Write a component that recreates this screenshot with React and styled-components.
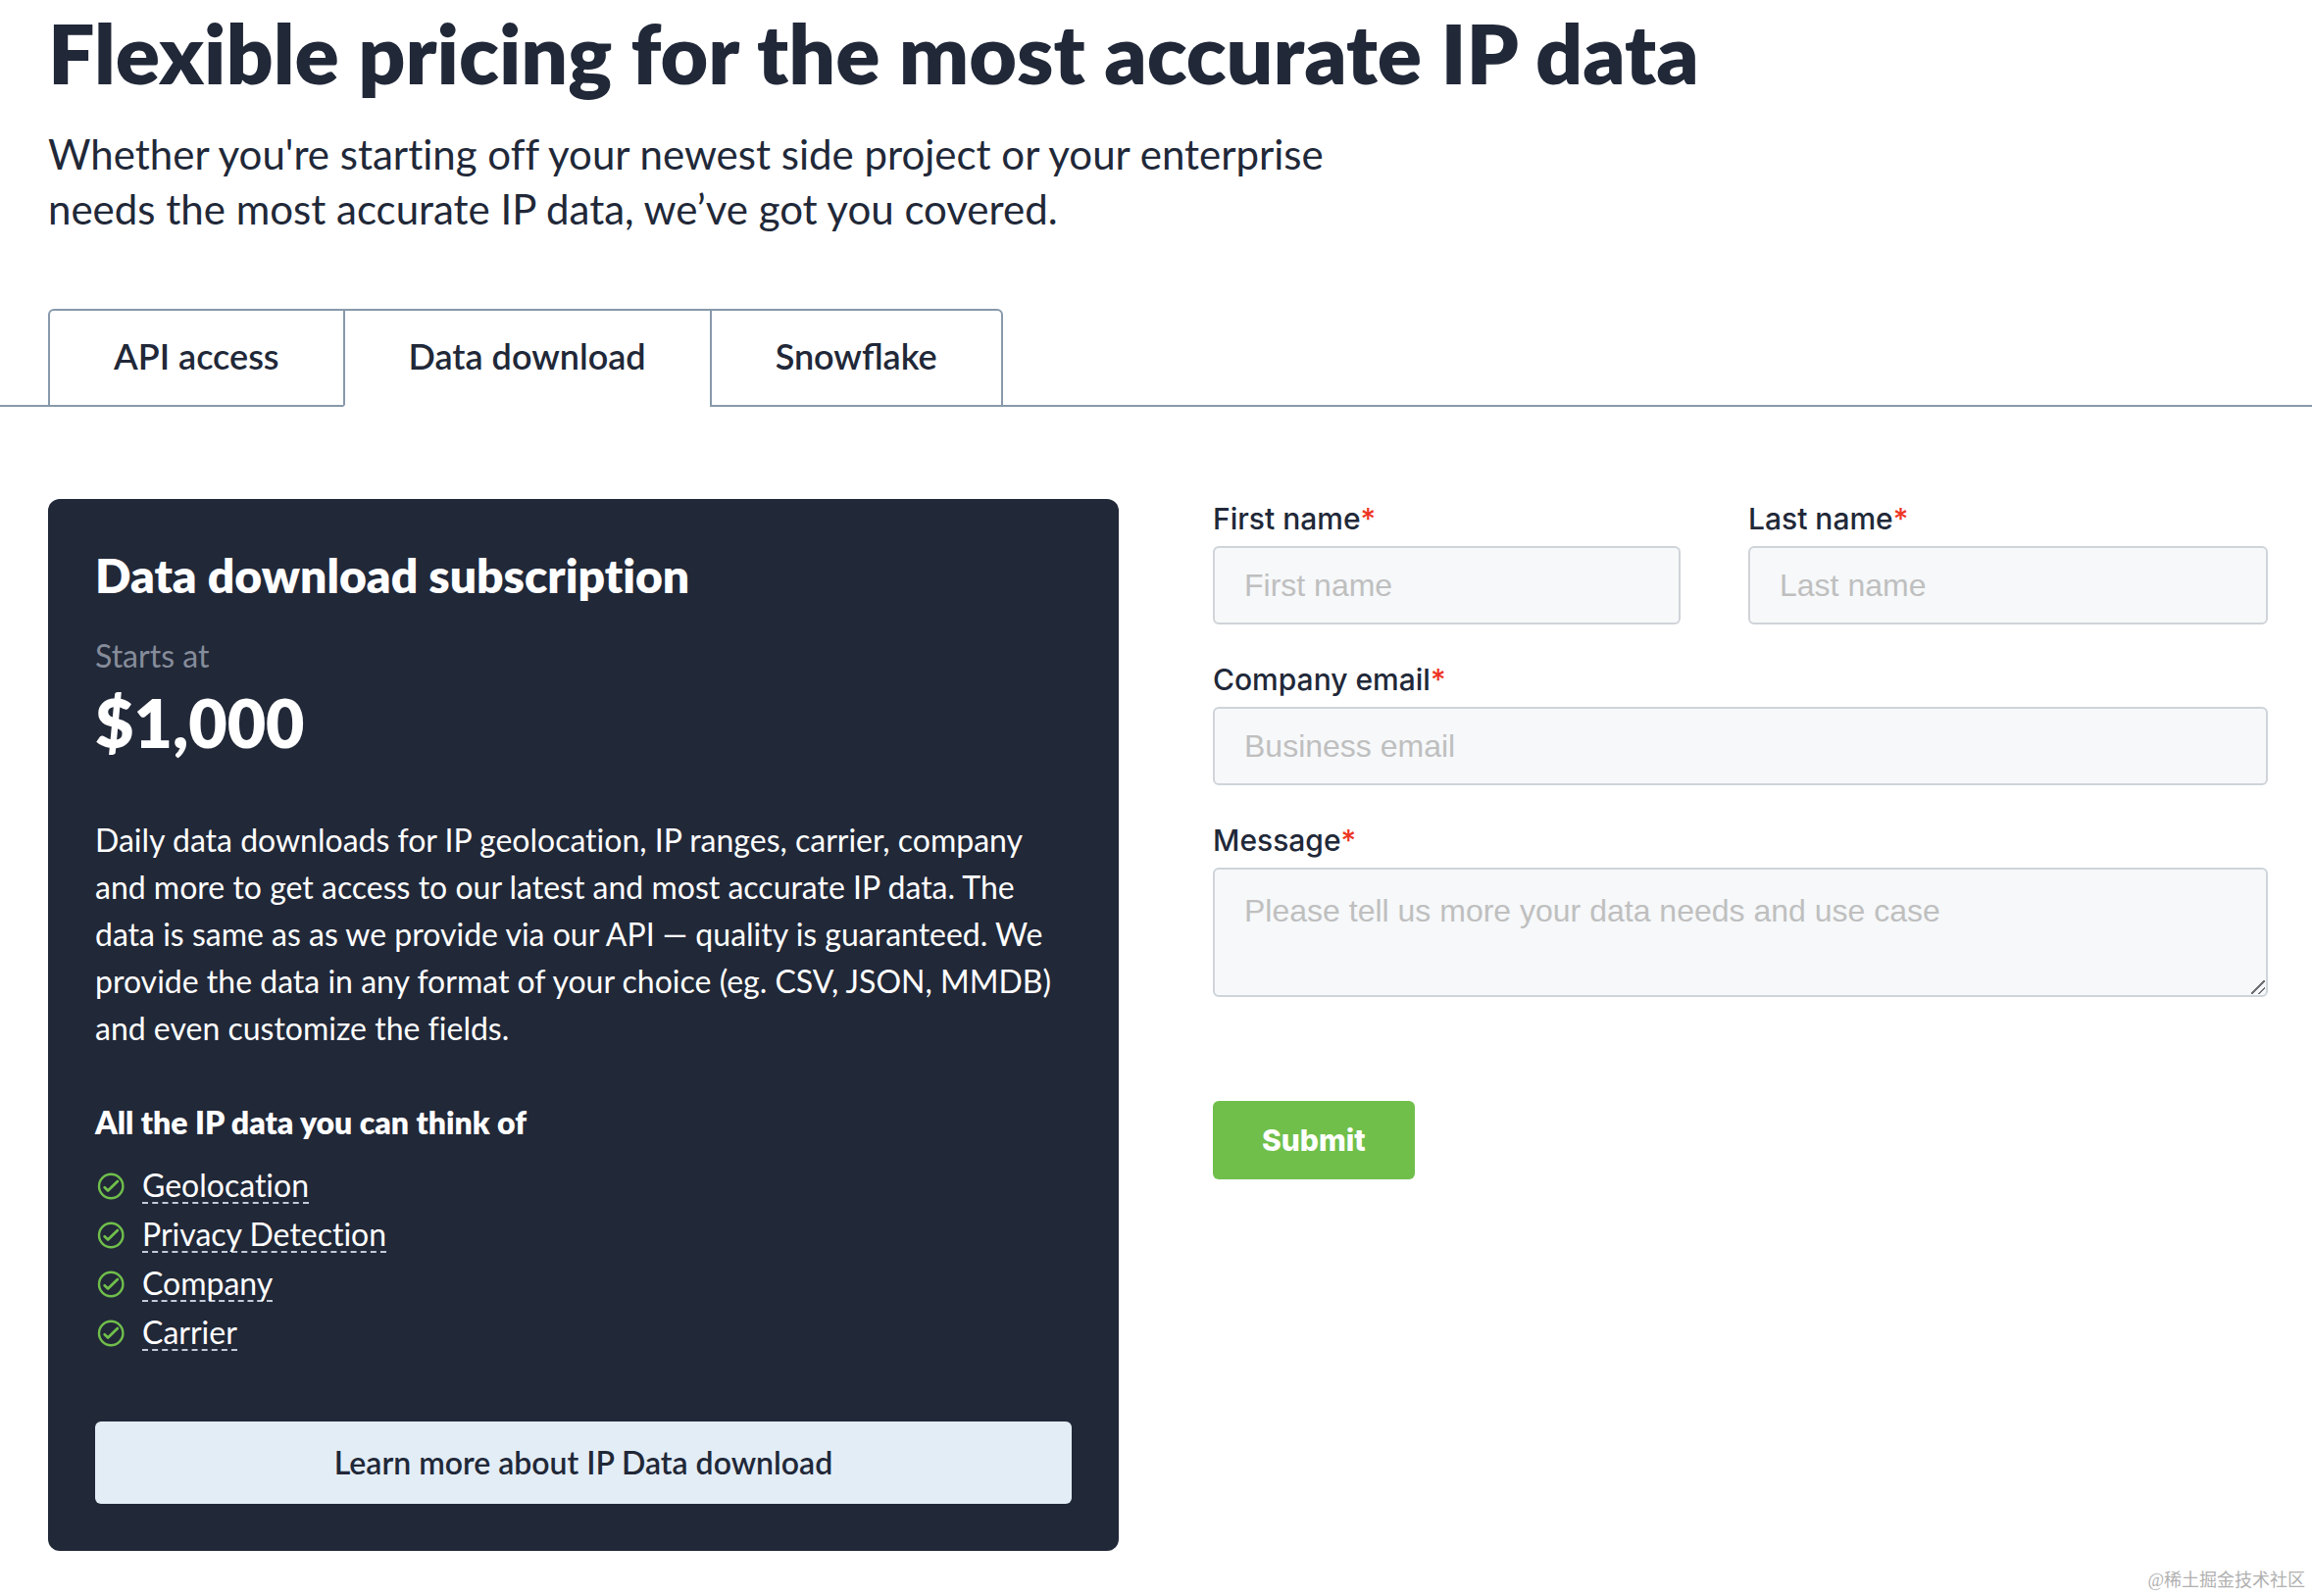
import React, { useState } from "react";
import styled, { createGlobalStyle } from "styled-components";

const NAVY = "#212838";
const LINE = "#8799aa";
const GREEN = "#70bf4b";

const GlobalStyle = createGlobalStyle`
  * {
    box-sizing: border-box;
  }
  body {
    margin: 0;
    background-color: white;
    color: ${NAVY};
    font-family: Lato, "Open Sans", sans-serif;
    font-size: 32px;
    font-variant-ligatures: none;
  }
  h1, h2, h3, p, ul {
    margin: 0;
    padding: 0;
  }
`;

const Page = styled.div`
  display: flex;
  flex-direction: column;
  min-height: 100vh;
`;

const Hero = styled.header`
  padding: 6px 49px 74px;
  h1 {
    font-size: 84px;
    line-height: 96px;
    font-weight: 800;
  }
  p {
    max-width: 1340px;
    margin-top: 27px;
    font-size: 42px;
    line-height: 56px;
  }
`;

const TabBar = styled.div`
  display: flex;
  padding: 0 49px;
  border-bottom: 2px solid ${LINE};
`;

const Tab = styled.button`
  height: 100px;
  margin: 0 -2px -2px 0;
  padding: 0 65px 4px;
  border: 2px solid ${LINE};
  border-bottom-color: ${({ $active }) => ($active ? "white" : LINE)};
  background-color: white;
  color: ${NAVY};
  font-family: inherit;
  font-size: 36px;
  font-weight: 600;
  cursor: pointer;
  &:first-child {
    border-top-left-radius: 6px;
  }
  &:last-child {
    border-top-right-radius: 6px;
  }
`;

const Content = styled.main`
  display: grid;
  grid-template-columns: 1092fr 1076fr;
  gap: 96px;
  align-items: start;
  padding: 94px 45px 0 49px;
  @media (max-width: 1100px) {
    grid-template-columns: 1fr;
  }
`;

const Card = styled.section`
  padding: 48px;
  border-radius: 12px;
  background-color: ${NAVY};
  color: white;
`;

const CardTitle = styled.h2`
  font-size: 48px;
  font-weight: 800;
  line-height: 60px;
`;

const StartsAt = styled.p`
  margin-top: 28px;
  color: #868c9a;
  font-size: 32px;
  line-height: 48px;
`;

const Price = styled.p`
  font-size: 68px;
  font-weight: 800;
  line-height: 88px;
`;

const Description = styled.p`
  margin-top: 52px;
  font-size: 32px;
  line-height: 48px;
`;

const ListTitle = styled.h3`
  margin-top: 48px;
  font-size: 32px;
  font-weight: 800;
  line-height: 48px;
`;

const FeatureList = styled.ul`
  margin-top: 16px;
  list-style: none;
  li {
    display: flex;
    align-items: center;
    gap: 18px;
    height: 50px;
  }
  svg {
    width: 30px;
    height: 28px;
    flex: none;
  }
  a {
    border-bottom: 2px dashed #c3cbd8;
    color: white;
    line-height: 34px;
    text-decoration: none;
  }
`;

const LearnMore = styled.a`
  display: block;
  margin-top: 65px;
  border-radius: 6px;
  background-color: #e3edf6;
  color: ${NAVY};
  font-weight: 600;
  line-height: 84px;
  text-align: center;
  text-decoration: none;
`;

const Form = styled.form`
  display: grid;
  grid-template-columns: 477fr 530fr;
  column-gap: 69px;
  row-gap: 36px;
  align-items: start;
`;

const Field = styled.div`
  display: flex;
  flex-direction: column;
  grid-column: ${({ $wide }) => ($wide ? "1 / -1" : "auto")};
  label {
    margin-bottom: 8px;
    font-family: Inter, sans-serif;
    font-size: 30px;
    font-weight: 500;
    line-height: 40px;
  }
  label span {
    color: #ee3524;
  }
  input,
  textarea {
    width: 100%;
    height: 80px;
    padding: 0 30px;
    border: 2px solid #cfd4d9;
    border-radius: 6px;
    background-color: #f6f8fa;
    color: ${NAVY};
    font-family: "Liberation Sans", Arial, sans-serif;
    font-size: 32px;
  }
  textarea {
    display: block;
    height: 132px;
    padding: 24px 30px;
    line-height: 36px;
  }
  textarea::-webkit-scrollbar {
    width: 18px;
    height: 18px;
  }
  textarea::-webkit-resizer {
    background: linear-gradient(
        135deg,
        transparent 46%,
        #6d7074 46% 54%,
        transparent 54% 72%,
        #6d7074 72% 80%,
        transparent 80%
      )
      0 0 / 14px 14px no-repeat;
  }
  ::placeholder {
    color: #bfbfbf;
  }
`;

const Submit = styled.button`
  justify-self: start;
  height: 80px;
  margin-top: 70px;
  padding: 0 50px;
  border: none;
  border-radius: 6px;
  background-color: ${GREEN};
  color: white;
  font-family: Inter, sans-serif;
  font-size: 30px;
  font-weight: 800;
  cursor: pointer;
`;

const Watermark = styled.footer`
  margin-top: auto;
  padding: 0 7px 3px;
  color: #b0b0b0;
  font-family: "Liberation Serif", "Noto Sans CJK SC", serif;
  font-size: 18px;
  line-height: 26px;
  text-align: right;
`;

const tabs = ["API access", "Data download", "Snowflake"];
const features = ["Geolocation", "Privacy Detection", "Company", "Carrier"];

function CheckIcon() {
  return (
    <svg viewBox="0 0 30 28" fill="none" stroke={GREEN} aria-hidden="true">
      <circle cx="16.2" cy="14" r="12.2" strokeWidth="2.4" />
      <path
        d="M9.7 15.2l3.4 3.3 9.8-9.4"
        strokeWidth="2.8"
        strokeLinecap="round"
        strokeLinejoin="round"
      />
    </svg>
  );
}

function TextField({ id, label, wide, as: Control = "input", ...rest }) {
  return (
    <Field $wide={wide}>
      <label htmlFor={id}>
        {label}
        <span>*</span>
      </label>
      <Control id={id} name={id} required {...rest} />
    </Field>
  );
}

export default function App() {
  const [active, setActive] = useState("Data download");

  return (
    <Page>
      <GlobalStyle />
      <Hero>
        <h1>Flexible pricing for the most accurate IP data</h1>
        <p>
          Whether you're starting off your newest side project or your
          enterprise needs the most accurate IP data, we’ve got you covered.
        </p>
      </Hero>

      <TabBar role="tablist">
        {tabs.map((tab) => (
          <Tab
            key={tab}
            type="button"
            role="tab"
            aria-selected={tab === active}
            $active={tab === active}
            onClick={() => setActive(tab)}
          >
            {tab}
          </Tab>
        ))}
      </TabBar>

      <Content>
        <Card>
          <CardTitle>Data download subscription</CardTitle>
          <StartsAt>Starts at</StartsAt>
          <Price>$1,000</Price>
          <Description>
            Daily data downloads for IP geolocation, IP ranges, carrier, company
            and more to get access to our latest and most accurate IP data. The
            data is same as as we provide via our API — quality is guaranteed.
            We provide the data in any format of your choice (eg. CSV, JSON,
            MMDB) and even customize the fields.
          </Description>
          <ListTitle>All the IP data you can think of</ListTitle>
          <FeatureList>
            {features.map((name) => (
              <li key={name}>
                <CheckIcon />
                <a href="#">{name}</a>
              </li>
            ))}
          </FeatureList>
          <LearnMore href="#">Learn more about IP Data download</LearnMore>
        </Card>

        <Form onSubmit={(e) => e.preventDefault()}>
          <TextField
            id="firstname"
            label="First name"
            placeholder="First name"
          />
          <TextField id="lastname" label="Last name" placeholder="Last name" />
          <TextField
            id="email"
            type="email"
            label="Company email"
            placeholder="Business email"
            wide
          />
          <TextField
            id="message"
            as="textarea"
            label="Message"
            placeholder="Please tell us more your data needs and use case"
            wide
          />
          <Submit type="submit">Submit</Submit>
        </Form>
      </Content>

      <Watermark>@稀土掘金技术社区</Watermark>
    </Page>
  );
}
